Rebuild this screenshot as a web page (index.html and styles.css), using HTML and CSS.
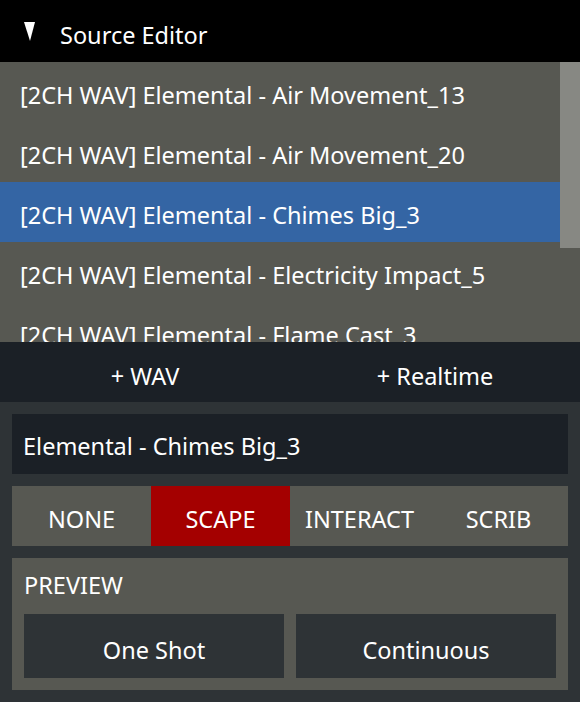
FILE: index.html
```html
<!DOCTYPE html>
<html lang="en">
<head>
  <meta charset="UTF-8" />
  <meta name="viewport" content="width=device-width, initial-scale=1.0" />
  <title>Source Editor</title>
  <link rel="stylesheet" href="styles.css">
</head>
<body>
  <!-- ============================
       Title Bar
       ============================ -->
  <header class="editor-header">
    <svg class="collapse-icon" width="12" height="20" viewBox="0 0 12 20" aria-hidden="true">
      <polygon points="0,0 11,0 6,19" fill="#ffffff" />
    </svg>
    <span class="editor-title">Source Editor</span>
  </header>

  <!-- ============================
       Source List
       ============================ -->
  <div class="source-list">
    <ul class="source-items">
      <li>[2CH WAV] Elemental - Air Movement_13</li>
      <li>[2CH WAV] Elemental - Air Movement_20</li>
      <li class="selected">[2CH WAV] Elemental - Chimes Big_3</li>
      <li>[2CH WAV] Elemental - Electricity Impact_5</li>
      <li>[2CH WAV] Elemental - Flame Cast_3</li>
    </ul>
    <div class="scroll-thumb"></div>
  </div>

  <!-- ============================
       Add Buttons
       ============================ -->
  <div class="add-bar">
    <button class="add-btn">+ WAV</button>
    <button class="add-btn">+ Realtime</button>
  </div>

  <!-- ============================
       Source Details
       ============================ -->
  <section class="details">
    <div class="name-field">Elemental - Chimes Big_3</div>

    <div class="mode-tabs">
      <button class="mode-tab">NONE</button>
      <button class="mode-tab active">SCAPE</button>
      <button class="mode-tab">INTERACT</button>
      <button class="mode-tab">SCRIB</button>
    </div>

    <div class="preview">
      <div class="preview-label">PREVIEW</div>
      <div class="preview-buttons">
        <button class="preview-btn">One Shot</button>
        <button class="preview-btn">Continuous</button>
      </div>
    </div>
  </section>
</body>
</html>
```

FILE: styles.css
```css
/* ============================
   Basic Reset
   ============================ */
* {
  margin: 0;
  padding: 0;
  box-sizing: border-box;
}

body {
  width: 580px;
  height: 702px;
  overflow: hidden;
  background-color: #2e3336;
  color: #ffffff;
  font-family: "Noto Sans", "Open Sans", sans-serif;
  font-size: 23.5px;
}

button {
  font: inherit;
  color: inherit;
  border: none;
  background: none;
  cursor: pointer;
  padding-top: 5px;
}

/* ============================
   Title Bar
   ============================ */
.editor-header {
  display: flex;
  align-items: center;
  height: 62px;
  background-color: #000000;
  padding-left: 24px;
}

.collapse-icon {
  display: block;
  margin-top: 2px;
}

.editor-title {
  margin-left: 24px;
  margin-top: 8px;
}

/* ============================
   Source List
   ============================ */
.source-list {
  position: relative;
  height: 280px;
  overflow: hidden;
  background-color: #575852;
}

.source-items {
  list-style: none;
  width: 560px;
}

.source-items li {
  height: 60px;
  line-height: 60px;
  padding-top: 3px;
  padding-left: 20px;
  white-space: nowrap;
}

.source-items li.selected {
  background-color: #3465a4;
}

.scroll-thumb {
  position: absolute;
  top: 0;
  right: 0;
  width: 20px;
  height: 186px;
  background-color: #878883;
}

/* ============================
   Add Buttons
   ============================ */
.add-bar {
  display: flex;
  height: 60px;
  background-color: #1b2026;
}

.add-btn {
  flex: 1;
  padding-top: 8px;
}

/* ============================
   Source Details
   ============================ */
.details {
  display: flex;
  flex-direction: column;
  gap: 12px;
  padding: 12px;
}

.name-field {
  height: 60px;
  line-height: 60px;
  padding-top: 2px;
  padding-left: 11px;
  background-color: #1b2026;
}

.mode-tabs {
  display: grid;
  grid-template-columns: repeat(4, 1fr);
  height: 60px;
  background-color: #575852;
}

.mode-tab.active {
  background-color: #a40000;
}

.preview {
  background-color: #575852;
  padding: 12px;
}

.preview-label {
  line-height: 30px;
  margin-bottom: 14px;
}

.preview-buttons {
  display: grid;
  grid-template-columns: 1fr 1fr;
  gap: 12px;
}

.preview-btn {
  height: 64px;
  padding-top: 7px;
  background-color: #2e3336;
}
```
